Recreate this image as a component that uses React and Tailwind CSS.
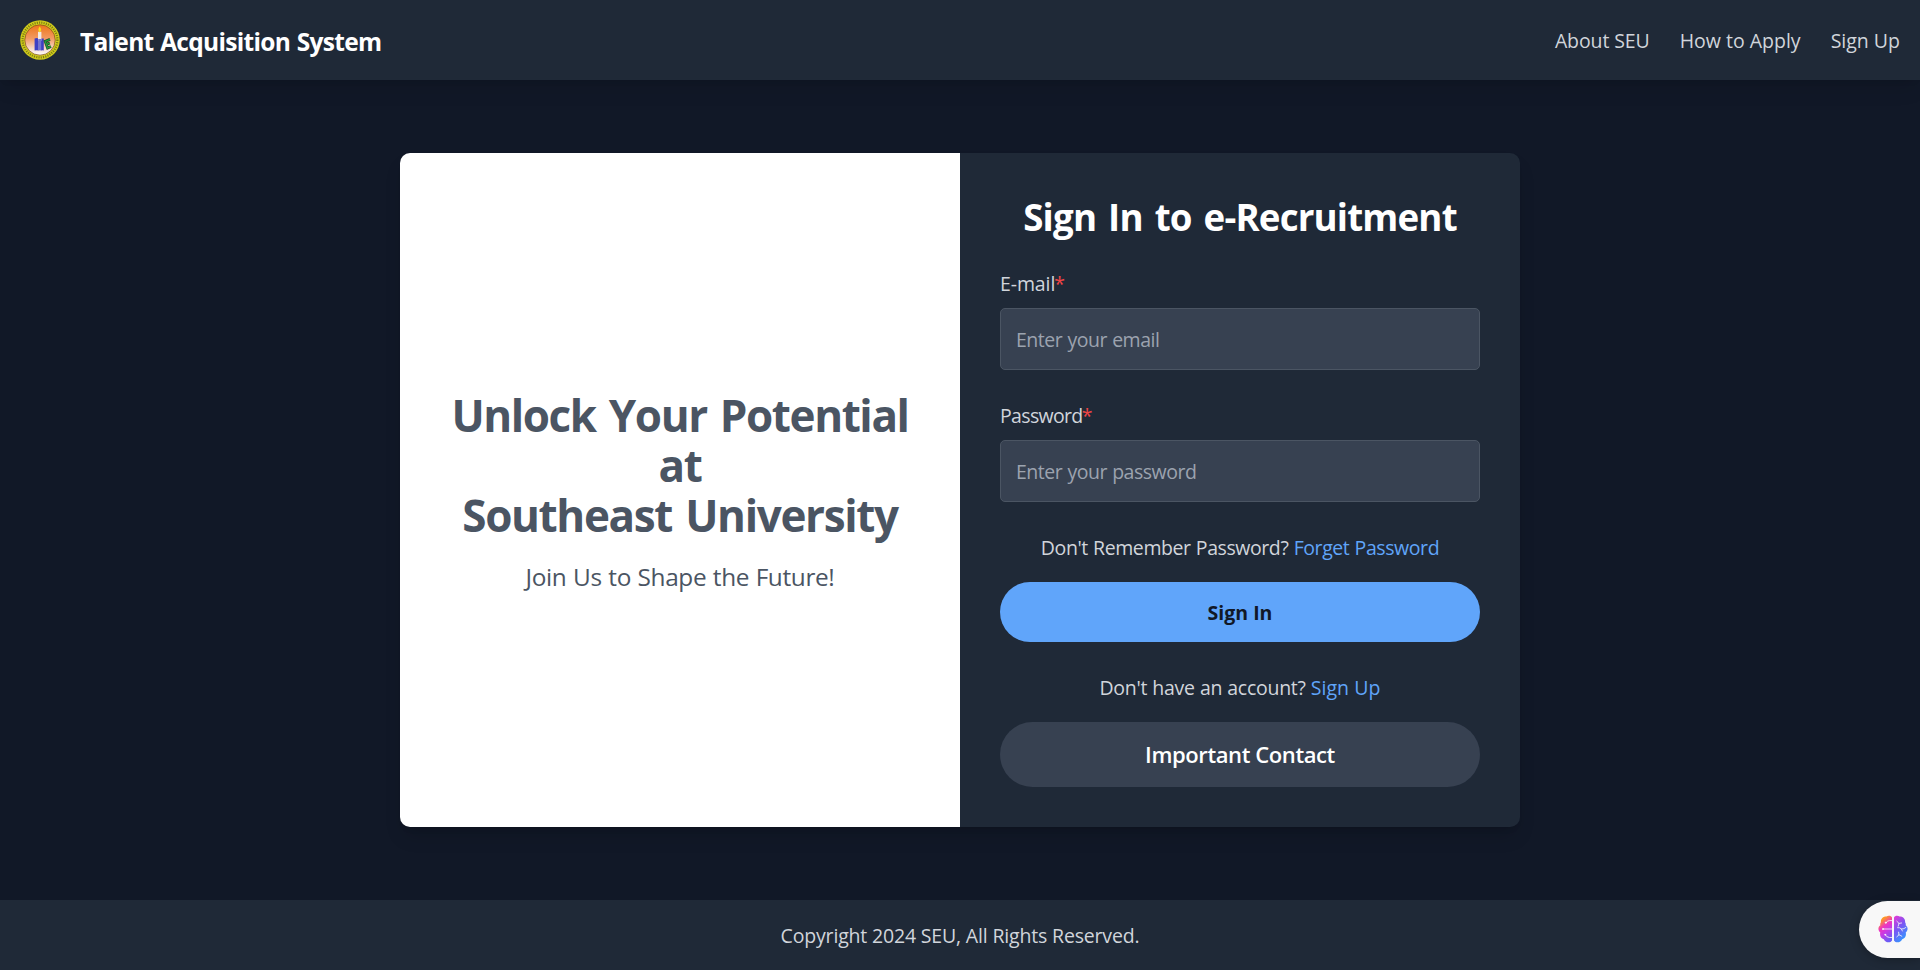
function UniversityLogo() {
  return (
    <svg className="size-10" viewBox="0 0 40 40" role="img" aria-label="SEU logo">
      <defs>
        <linearGradient id="sunrise" x1="0" y1="0" x2="0" y2="1">
          <stop offset="0" stopColor="#ee7418" />
          <stop offset="0.45" stopColor="#f29a62" />
          <stop offset="0.8" stopColor="#f6dccf" />
          <stop offset="1" stopColor="#ffffff" />
        </linearGradient>
      </defs>
      <circle cx="20" cy="20" r="19.8" fill="#d0cc1a" />
      <circle cx="20" cy="20" r="17.4" fill="none" stroke="#5f5d14" strokeWidth="2.2" strokeDasharray="1.1 1.2" opacity="0.75" />
      <circle cx="20" cy="20" r="15.2" fill="url(#sunrise)" stroke="#8a5a1a" strokeWidth="0.8" />
      <path d="M14.6 18.4q2.200-.8 4 0v12.200q-2-.8-4 0z" fill="#3d3fc4" />
      <path d="M21 18.400h2.800v12.200q-1.400-.6-2.800 0z" fill="#3d3fc4" />
      <rect x="18" y="11.800" width="3.400" height="9" fill="#f3e9e4" />
      <rect x="18.200" y="19" width="3" height="11.400" fill="#7073d2" />
      <path d="M19.700 6.600q2.900 3.400 0 5.800q-2.700-2.400 0-5.800z" fill="#f7e11a" />
      <path d="M30 19.400l-4.800 2l2.400 6.600l3.400-1.600M26.600 24.400l3.200-1.400" fill="none" stroke="#1f4a2c" strokeWidth="2.800" />
      <path d="M30 19.400l-4.800 2l2.400 6.600l3.400-1.600M26.600 24.400l3.200-1.400" fill="none" stroke="#23a03c" strokeWidth="1.300" />
    </svg>
  );
}

function BrainIcon() {
  return (
    <svg className="h-7 w-[30px]" viewBox="0 0 30 28" aria-hidden="true">
      <defs>
        <linearGradient id="brainLeft" x1="0.2" y1="0" x2="0.6" y2="1">
          <stop offset="0.14" stopColor="#ff9a1f" />
          <stop offset="0.42" stopColor="#ee35c0" />
          <stop offset="0.65" stopColor="#c63be6" />
          <stop offset="1" stopColor="#6a5cf5" />
        </linearGradient>
        <linearGradient id="brainRight" x1="0.1" y1="0" x2="0.6" y2="1">
          <stop offset="0" stopColor="#e23ad6" />
          <stop offset="0.45" stopColor="#7c55f3" />
          <stop offset="1" stopColor="#2f9bff" />
        </linearGradient>
      </defs>
      <path
        d="M14 2.6C13.2.4 10 .2 8.400 1.6C5.400 1.200 2.600 3.800 2.900 7.200C2 8.400 2.200 9.600 2.300 10.300C-.2 11.700-.2 16 2.300 17.500C1.400 20.600 3 23.400 5.800 24.200C7 27.600 12.200 28.600 14 25.400Z"
        fill="url(#brainLeft)"
      />
      <path
        d="M16 2.600C16.800.4 20 .2 21.600 1.600C24.600 1.200 27.400 3.800 27.100 7.200C28 8.400 27.800 9.600 27.700 10.300C30.200 11.700 30.200 16 27.700 17.500C28.600 20.600 27 23.400 24.200 24.200C23 27.600 17.800 28.600 16 25.400Z"
        fill="url(#brainRight)"
      />
      <g fill="none" stroke="#f8f8f8" strokeWidth="0.9" strokeLinecap="round" strokeOpacity="0.9">
        <path d="M14 5.600H11.600Q9.600 5.600 8.400 7.200" />
        <circle cx="7.800" cy="7.700" r="0.600" fill="#f8f8f8" />
        <path d="M14 14H5.400" />
        <circle cx="4.900" cy="14" r="0.500" fill="#f8f8f8" />
        <path d="M14 22.500H11.500Q8.400 22.300 7.400 20" />
        <circle cx="7.200" cy="19.700" r="0.500" fill="#f8f8f8" />
        <path d="M18.800 6.200L21 8.400L23.600 8M21 8.400L20.200 11.200" />
        <path d="M19.600 12.600Q22 12.200 23.400 14Q26 14.200 28 12.400M23.400 14L24.400 16" />
        <path d="M20.600 17.200L21 19.800L18.800 21.800M21 19.800L23.800 21.200" />
      </g>
    </svg>
  );
}

function Field({ id, label, labelClass, type, placeholder }) {
  return (
    <div className="mb-[30px]">
      <label htmlFor={id} className="mb-2.5 block pt-px leading-[29px] text-gray-300">
        <span className={labelClass}>{label}</span>
        <span className="-ml-px text-[#ef4444]">*</span>
      </label>
      <input
        id={id}
        type={type}
        placeholder={placeholder}
        className="block h-[62px] w-full rounded-[5px] border border-[#4b5563] bg-[#374151] px-[15px] tracking-[-0.48px] [word-spacing:0.6px] text-white placeholder:text-[#9ca3af]"
      />
    </div>
  );
}

export default function App() {
  return (
    <div className="flex h-[970px] flex-col overflow-hidden bg-[#111827] font-['Open_Sans','Noto_Sans',sans-serif] text-[19.5px] text-[#d1d5db]">
      <header className="flex h-20 items-center justify-between bg-[#1f2937] px-5 shadow-[0_12px_19px_-4px_rgba(0,0,0,0.1),0_5px_7px_-5px_rgba(0,0,0,0.1)]">
        <div className="flex items-center gap-5">
          <UniversityLogo />
          <h1 className="pt-1 text-[24.5px] font-bold tracking-[-0.7px] [word-spacing:1px] text-white">Talent Acquisition System</h1>
        </div>
        <nav className="flex gap-[30px] pt-0.5">
          <a href="#about" className="tracking-[-0.1px]">About SEU</a>
          <a href="#apply">How to Apply</a>
          <a href="#signup">Sign Up</a>
        </nav>
      </header>

      <main className="flex flex-1 items-center justify-center">
        <div className="grid h-[674px] w-[1120px] grid-cols-2 overflow-hidden rounded-[10px] shadow-[0_12px_19px_-4px_rgba(0,0,0,0.15),0_5px_7px_-5px_rgba(0,0,0,0.15)]">
          <section className="flex flex-col items-center justify-center bg-white pt-1 text-center text-[#4b5563]">
            <h2 className="mb-[17px] text-[44px] leading-[50px] font-bold">
              <span className="block tracking-[-1.4px] [word-spacing:3px]">Unlock Your Potential</span>
              <span className="block tracking-[-1.4px]">at</span>
              <span className="block tracking-[-1.35px] [word-spacing:3px]">Southeast University</span>
            </h2>
            <p className="pt-0.5 text-[24.4px] leading-[35px] tracking-[-0.36px] [word-spacing:0.6px]">Join Us to Shape the Future!</p>
          </section>

          <section className="bg-[#1f2937] p-10">
            <h2 className="mb-[29px] pt-0.5 text-center text-[36.7px] leading-[44px] font-bold tracking-[-0.82px] [word-spacing:3.2px] text-white">
              Sign In to e-Recruitment
            </h2>
            <form>
              <Field id="email" label="E-mail" labelClass="tracking-[-0.1px]" type="email" placeholder="Enter your email" />
              <Field id="password" label="Password" labelClass="tracking-[-0.66px]" type="password" placeholder="Enter your password" />
              <p className="mb-5 pt-px text-center leading-[29px] tracking-[-0.42px] [word-spacing:0.6px]">
                Don't Remember Password?{' '}
                <a href="#forgot" className="text-[#60a5fa]">Forget Password</a>
              </p>
              <button type="button" className="h-[60px] w-full rounded-full bg-[#60a5fa] pt-0.5 text-[19.5px] font-bold text-[#111827]">
                Sign In
              </button>
            </form>
            <p className="mt-[30px] mb-5 pt-px text-center leading-[29px] tracking-[-0.26px] [word-spacing:0.3px]">
              Don't have an account?{' '}
              <a href="#signup" className="tracking-normal text-[#60a5fa]">Sign Up</a>
            </p>
            <button type="button" className="h-[65px] w-full rounded-full bg-[#374151] text-[22px] font-semibold tracking-[-0.4px] text-white">
              Important Contact
            </button>
          </section>
        </div>
      </main>

      <footer className="flex h-[70px] items-center justify-center bg-[#1f2937] pt-0.5 tracking-[-0.17px]">
        Copyright 2024 SEU, All Rights Reserved.
      </footer>

      <button
        type="button"
        aria-label="Open assistant"
        className="absolute top-[901px] right-0 flex h-[57px] w-[61px] items-center rounded-l-full bg-[#f8f8f8] pb-0.5 pl-[19px] shadow-[0_2px_10px_rgba(0,0,0,0.25)]"
      >
        <BrainIcon />
      </button>
    </div>
  );
}
